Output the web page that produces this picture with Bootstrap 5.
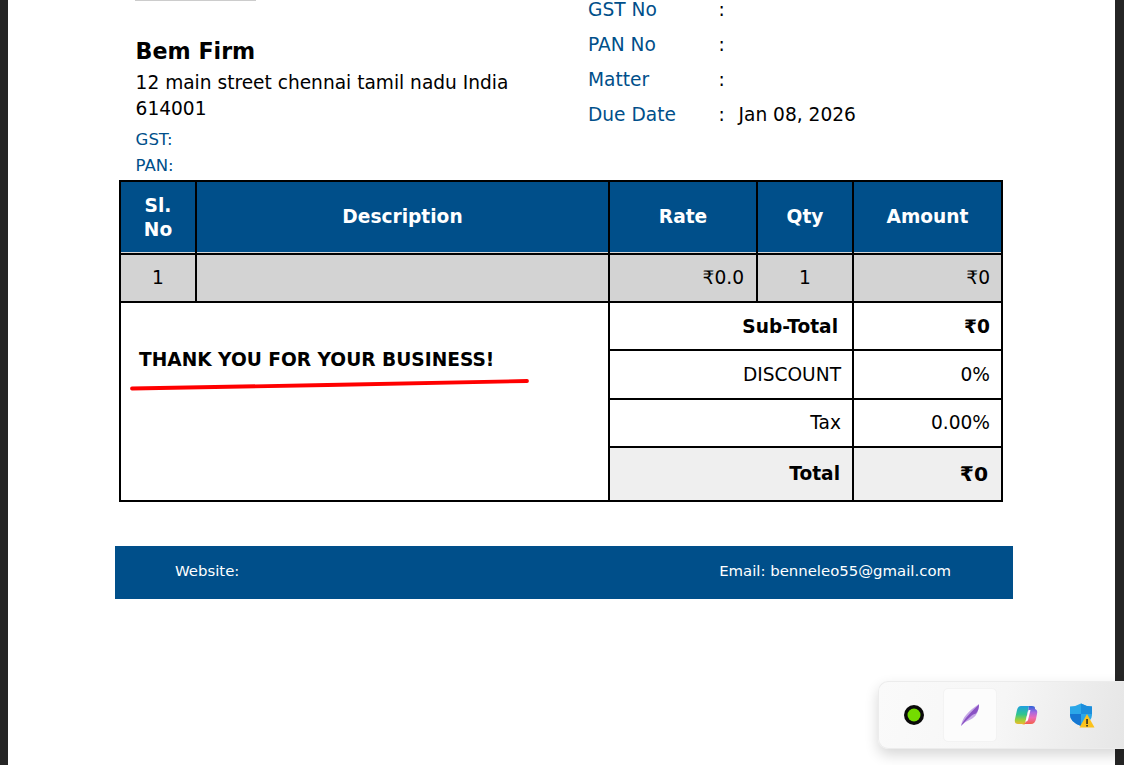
<!DOCTYPE html>
<html lang="en"><head><meta charset="utf-8"><title>Invoice</title>
<link href="https://cdn.jsdelivr.net/npm/bootstrap@5.3.0/dist/css/bootstrap.min.css" rel="stylesheet">
<style>
html,body{height:765px;overflow:hidden;background:#252525;margin:0}
body{font-family:"DejaVu Sans",sans-serif;color:#000;position:relative}
.sheet{margin:0 9px 0 8px;height:765px;background:#fff;padding:0 112px 0 111px}
.logo-rule{width:121px;height:1px;background:#ccc;margin-left:16px}
.head-row{height:179px}
.left-side{width:453px;padding-left:16.600px;padding-top:36px}
.firm{font-size:22.200px;font-weight:700;line-height:28px;margin:0 0 5px}
.addr{font-size:18.580px;line-height:26px;margin:0 0 5px;width:400px}
.tax{font-size:16.500px;line-height:26px;color:#004f8a}
.right-side{padding-left:16px;margin-top:-9.500px;font-size:18.600px}
.meta-line{height:35.200px;line-height:35px;display:flex}
.meta-key{width:130.500px;color:#004f8a}
.meta-sep{width:20px}
.inv{width:883px;table-layout:fixed;border-collapse:collapse;margin:0;font-size:18.600px}
.inv th,.inv td{border:2px solid #000;padding:0 12px;vertical-align:middle;line-height:24px}
.inv thead th{background:#004f8a;color:#fff;text-align:center;height:73px;font-weight:700;box-shadow:inset 0 -1px 0 #d8d8d8;padding-bottom:2px}
.inv thead th.first-head{padding-bottom:0}
.inv tbody tr.item td{background:#d3d3d3;height:48px}
.inv .sumrow td{height:48px;padding-top:1px}
.inv .sumrow-tall td{height:49px}
.inv .sumrow-plain td{padding-top:0}
.inv td.num{text-align:right}
.inv td.end-col{padding-right:11px}
.inv td.mid{text-align:center}
.inv .sumrow td.lab{text-align:right;padding-right:11px}
.inv .sumrow td.lab-tight{padding-right:14px}
.inv .totalrow td{background:#efefef;height:54px;font-weight:700}
.inv .big{font-size:20.300px;margin-right:2px}
.inv .totalrow td.lab{padding-right:12px}
.inv .sumrow td.thanks{vertical-align:top;padding:45px 0 0 18px;font-weight:700;position:relative}
.scribble{position:absolute;left:9px;top:74px;width:400px;height:14px}
.foot-bar{width:898px;margin:44px 0 0 -4px;height:53px;background:#004f8a;color:#fff;font-size:14.900px;padding:0 62px 3px 60px}
.tray{position:absolute;left:878px;top:681px;width:246px;height:68px;background:linear-gradient(100deg,#fafafa 0%,#f6f6f6 50%,#e6e6e6 100%);border:1px solid #ececec;border-right:0;border-radius:10px 0 0 10px;box-shadow:0 6px 14px rgba(0,0,0,.16)}
.tray-row{padding-left:8px;gap:2px}
.slot{width:54px;height:54px;border-radius:5px}
.slot-on{background:#fcfcfc;border:1px solid #f3f3f3}
.soft{filter:blur(.6px)}
</style></head>
<body>
<div class="sheet">
  <div class="logo-rule"></div>
  <div class="head-row d-flex">
    <div class="left-side">
      <h1 class="firm">Bem Firm</h1>
      <p class="addr">12 main street chennai tamil nadu India 614001</p>
      <div class="tax">GST:</div>
      <div class="tax">PAN:</div>
    </div>
    <div class="right-side">
      <div class="meta-line"><span class="meta-key">GST No</span><span class="meta-sep">:</span><span></span></div>
      <div class="meta-line"><span class="meta-key">PAN No</span><span class="meta-sep">:</span><span></span></div>
      <div class="meta-line"><span class="meta-key">Matter</span><span class="meta-sep">:</span><span></span></div>
      <div class="meta-line"><span class="meta-key">Due Date</span><span class="meta-sep">:</span><span>Jan 08, 2026</span></div>
    </div>
  </div>
  <table class="inv">
    <colgroup><col style="width:76px"><col style="width:413px"><col style="width:148px"><col style="width:96px"><col style="width:149px"></colgroup>
    <thead><tr><th class="first-head">Sl. No</th><th>Description</th><th>Rate</th><th>Qty</th><th>Amount</th></tr></thead>
    <tbody>
      <tr class="item"><td class="mid">1</td><td></td><td class="num">₹0.0</td><td class="mid">1</td><td class="num end-col">₹0</td></tr>
      <tr class="sumrow"><td colspan="2" rowspan="4" class="thanks">THANK YOU FOR YOUR BUSINESS!
        <svg class="scribble" viewBox="0 0 400 14"><path d="M2 11.500 C120 9 280 7 397 4" fill="none" stroke="#f00" stroke-width="3.800" stroke-linecap="round"/></svg></td>
        <td colspan="2" class="lab lab-tight fw-bold">Sub-Total</td><td class="num end-col fw-bold">₹0</td></tr>
      <tr class="sumrow sumrow-tall"><td colspan="2" class="lab">DISCOUNT</td><td class="num end-col">0%</td></tr>
      <tr class="sumrow sumrow-plain"><td colspan="2" class="lab">Tax</td><td class="num end-col">0.00%</td></tr>
      <tr class="totalrow"><td colspan="2" class="lab text-end">Total</td><td class="num end-col"><span class="big">₹0</span></td></tr>
    </tbody>
  </table>
  <div class="foot-bar d-flex justify-content-between align-items-center"><span>Website:</span><span>Email: benneleo55@gmail.com</span></div>
</div>
<div class="tray tray-row d-flex align-items-center">
  <div class="slot d-flex align-items-center justify-content-center"><svg class="soft" width="24" height="24" viewBox="0 0 24 24"><circle cx="12" cy="12" r="10" fill="#0a0a0a"/><circle cx="12" cy="12" r="6.500" fill="#74dc00"/></svg></div>
  <div class="slot slot-on d-flex align-items-center justify-content-center"><svg class="soft" width="24" height="26" viewBox="0 0 24 26"><path d="M3 24 C4 16 10 9 21 2 C21 8 19 13 15 16 C11 19 7 19 3 24Z" fill="#c5a8e6"/><path d="M3 24 C6 17 13 10 21 2.500 C21 6 20 9 18 11.500 C14 12 9 18 3 24Z" fill="#8a52c4"/></svg></div>
  <div class="slot d-flex align-items-center justify-content-center"><svg class="soft" width="24" height="22" viewBox="0 0 24 22">
    <defs>
      <linearGradient id="cpl" x1="0" y1="0" x2="0" y2="1"><stop offset="0" stop-color="#1f9fe0"/><stop offset=".45" stop-color="#2fc58f"/><stop offset=".75" stop-color="#9dcf3a"/><stop offset="1" stop-color="#f5b62d"/></linearGradient>
      <linearGradient id="cpr" x1="0" y1="0" x2="0" y2="1"><stop offset="0" stop-color="#2a63d8"/><stop offset=".35" stop-color="#a66ae0"/><stop offset=".65" stop-color="#ee6bb5"/><stop offset="1" stop-color="#f2604a"/></linearGradient>
    </defs>
    <path d="M7 2 H15 L11 20 Q10.500 21 8 20 H4 Q0 20 1 15 L3 6 Q4 2 7 2Z" fill="url(#cpl)"/>
    <path d="M15 2 H18 Q21 2 21 4 V5 Q24 6 23 10 L22 15 Q21 20 17 20 H9 Q11.500 20 12 17Z" fill="url(#cpr)"/>
    <path d="M14.500 6 H16.500 L14 16 Q13 18 11.500 17.500Z" fill="#fff"/>
  </svg></div>
  <div class="slot d-flex align-items-center justify-content-center"><svg class="soft" width="26" height="26" viewBox="0 0 26 26"><path d="M12 1.500 Q17 4.500 23 4.500 V13 Q23 20 12 24 Q1 20 1 13 V4.500 Q7 4.500 12 1.500Z" fill="#2ba7e8"/><path d="M12 1.500 Q17 4.500 23 4.500 V12 H12Z" fill="#1b8ddc"/><path d="M1 12 H12 V24 Q1 20 1 13Z" fill="#1677d2"/><path d="M18 12 L25.500 25.500 H10.500Z" fill="#fcc21b"/><rect x="17.300" y="17" width="1.500" height="5" fill="#222"/><rect x="17.300" y="23" width="1.500" height="1.500" fill="#222"/></svg></div>
</div>
<script src="https://cdn.jsdelivr.net/npm/bootstrap@5.3.0/dist/js/bootstrap.bundle.min.js"></script>
</body></html>
